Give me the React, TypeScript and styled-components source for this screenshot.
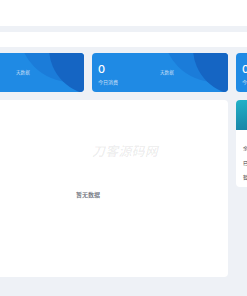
import styled, { createGlobalStyle } from 'styled-components';

const GlobalStyle = createGlobalStyle`
    html, body {
        margin: 0;
        padding: 0;
        background: #eef1f6;
        font-family: "Noto Sans CJK SC", "Noto Sans", sans-serif;
        overflow: hidden;
    }
`;

const Page = styled.div`
    position: relative;
    width: 247px;
    height: 296px;
    overflow: hidden;
`;

const Header = styled.header`
    height: 26px;
    background: #ffffff;
`;

const TabBar = styled.nav`
    height: 15px;
    margin-top: 6px;
    background: #ffffff;
`;

const Content = styled.main`
    display: grid;
    grid-template-columns: repeat(3, 136px);
    grid-template-rows: 39px 177px;
    gap: 8px;
    margin-left: -52px;
    padding-top: 6px;
`;

const StatCard = styled.div`
    position: relative;
    overflow: hidden;
    box-sizing: border-box;
    padding: 11px 6px 0;
    border-radius: 4px;
    background: #1f8ae4;
    color: #ffffff;
`;

const Circle = styled.span<{ $size: number; $left: number; $top: number; $color: string }>`
    position: absolute;
    left: ${(p) => p.$left}px;
    top: ${(p) => p.$top}px;
    width: ${(p) => p.$size}px;
    height: ${(p) => p.$size}px;
    border-radius: 50%;
    background: ${(p) => p.$color};
`;

const Value = styled.div`
    position: relative;
    font-family: "Inter", "Noto Sans", sans-serif;
    font-size: 11px;
    line-height: 11px;
    font-weight: 500;
`;

const Caption = styled.div`
    position: relative;
    margin-top: 4px;
    font-size: 5px;
    line-height: 6px;
    color: rgba(255, 255, 255, 0.75);
`;

const RangeTag = styled.span`
    position: absolute;
    left: 68px;
    top: 16px;
    font-size: 4.6px;
    color: rgba(255, 255, 255, 0.7);
`;

const ChartPanel = styled.section`
    grid-column: 1 / span 2;
    display: flex;
    justify-content: center;
    padding-top: 91px;
    box-sizing: border-box;
    border-radius: 4px;
    background: #ffffff;
`;

const Empty = styled.span`
    font-size: 6px;
    line-height: 8px;
    font-weight: 500;
    color: #666b75;
`;

const SidePanel = styled.aside`
    align-self: start;
    height: 87px;
    border-radius: 4px;
    overflow: hidden;
    background: #ffffff;
`;

const SideHead = styled.div`
    height: 30px;
    background: linear-gradient(170deg, #22b2c8 0%, #1b8fae 45%, #1a6a91 100%);
`;

const SideList = styled.ul`
    display: flex;
    flex-direction: column;
    gap: 8.5px;
    margin: 0;
    padding: 15px 7px 0;
    list-style: none;
`;

const SideItem = styled.li`
    font-size: 5px;
    line-height: 6px;
    color: #333333;
`;

const Watermark = styled.div`
    position: absolute;
    left: 92px;
    top: 141px;
    font-size: 13px;
    font-weight: 700;
    font-style: italic;
    letter-spacing: 0.2px;
    color: rgba(0, 0, 0, 0.07);
    pointer-events: none;
`;

const cards = [
    { value: '0', caption: '今日消费' },
    { value: '0', caption: '今日消费' },
    { value: '0', caption: '今日消费' },
];

export default function App() {
    return (
        <Page>
            <GlobalStyle />
            <Header />
            <TabBar />
            <Content>
                {cards.map((card, i) => (
                    <StatCard key={i}>
                        <Circle $size={104} $left={71} $top={-75} $color="#1b7cd9" />
                        <Circle $size={94} $left={101} $top={-52} $color="#1565c3" />
                        <Value>{card.value}</Value>
                        <Caption>{card.caption}</Caption>
                        <RangeTag>天数据</RangeTag>
                    </StatCard>
                ))}
                <ChartPanel>
                    <Empty>暂无数据</Empty>
                </ChartPanel>
                <SidePanel>
                    <SideHead />
                    <SideList>
                        <SideItem>余额</SideItem>
                        <SideItem>已用</SideItem>
                        <SideItem>暂无</SideItem>
                    </SideList>
                </SidePanel>
            </Content>
            <Watermark>刀客源码网</Watermark>
        </Page>
    );
}
